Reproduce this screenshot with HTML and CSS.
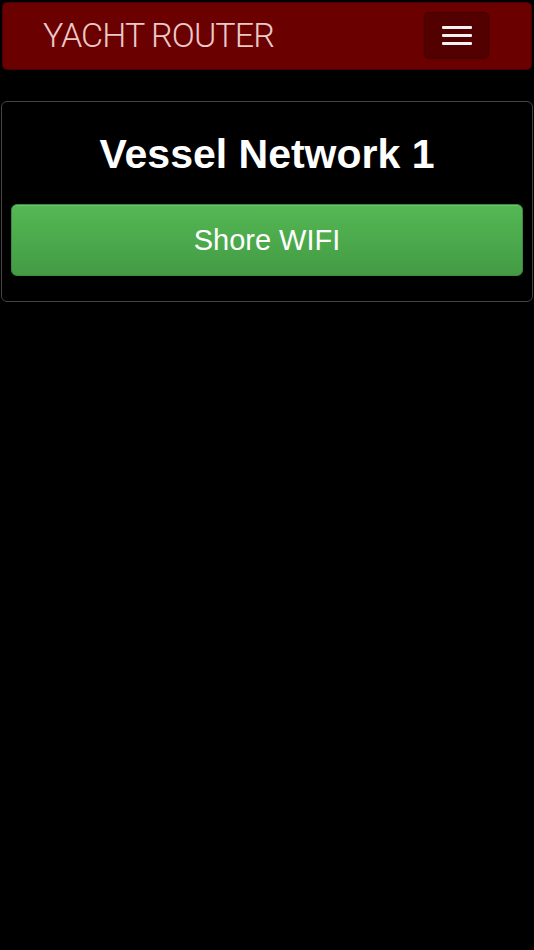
FILE: index.html
```html
<!DOCTYPE html>
<html>
<head>
<meta charset="utf-8">
<link rel="stylesheet" href="styles.css">
</head>
<body>
<nav class="navbar">
  <span class="brand">YACHT ROUTER</span>
  <button class="toggle" type="button" aria-label="Menu">
    <span class="bar"></span>
    <span class="bar"></span>
    <span class="bar"></span>
  </button>
</nav>
<section class="panel">
  <h1 class="title">Vessel Network 1</h1>
  <button class="btn-green" type="button">Shore WIFI</button>
</section>
</body>
</html>
```
FILE: styles.css
```css
html, body {
  margin: 0;
  padding: 0;
  background: #000;
  font-family: "Liberation Sans", Arial, sans-serif;
}
body {
  padding: 2px 1px 0 1px;
}
.navbar {
  margin: 0 1px;
  height: 68px;
  box-sizing: border-box;
  background: #6a0000;
  border: 1px solid #4a0000;
  border-radius: 5px;
  display: flex;
  align-items: center;
  justify-content: space-between;
  padding: 0 42px 0 40px;
}
.brand {
  font-family: Roboto, "Liberation Sans", sans-serif;
  font-weight: 300;
  font-size: 34px;
  color: #ecc8c8;
  letter-spacing: -0.9px;
  line-height: 1;
  margin-top: -2px;
}
.toggle {
  width: 65px;
  height: 46px;
  margin-top: -2px;
  background: #530000;
  border: 1px solid #460000;
  border-radius: 5px;
  display: flex;
  flex-direction: column;
  align-items: center;
  justify-content: center;
  gap: 5px;
  padding: 0;
  box-shadow: 0 1px 2px rgba(0,0,0,0.3);
}
.bar {
  display: block;
  width: 30px;
  height: 3px;
  border-radius: 1px;
  background: #f2f2f2;
}
.panel {
  margin-top: 31px;
  border: 1px solid #444;
  border-radius: 6px;
  height: 201px;
  box-sizing: border-box;
  padding: 0 9px;
  display: flex;
  flex-direction: column;
  align-items: stretch;
}
.title {
  margin: 29px 0 0 0;
  font-size: 41px;
  line-height: 46px;
  font-weight: bold;
  color: #fff;
  text-align: center;
  height: 73px;
}
.btn-green {
  height: 72px;
  border: 1px solid #3d8b3d;
  border-radius: 6px;
  background: linear-gradient(#54b854, #449b44);
  color: #fff;
  font-family: "Liberation Sans", Arial, sans-serif;
  font-size: 29px;
  padding: 0;
  box-shadow: inset 0 1px 0 rgba(255,255,255,0.15);
}
```
